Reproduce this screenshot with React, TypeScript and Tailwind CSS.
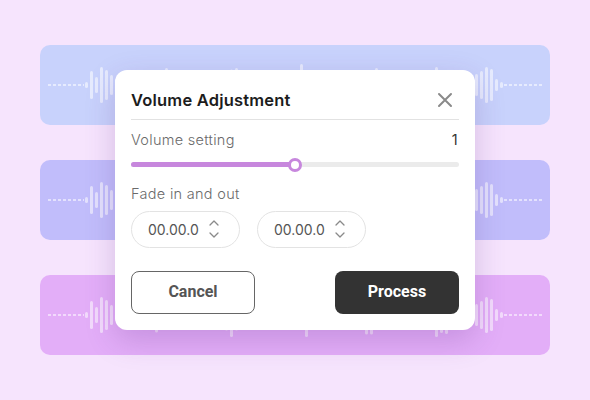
import React from 'react';

function rand(seed: number) {
  let s = seed;
  return () => {
    s = (s * 9301 + 49297) % 233280;
    return s / 233280;
  };
}

function makeHeights(seed: number) {
  const r = rand(seed);
  const out: number[] = [];
  for (let i = 0; i < 84; i++) {
    const burst = i % 14 < 3 ? 1 : 0;
    const base = burst ? 14 + r() * 30 : 4 + r() * 8;
    out.push(Math.round(base));
  }
  const left = [6, 28, 16, 36, 30, 20, 12];
  const right = [16, 22, 28, 36, 32, 12, 6];
  left.forEach((h, i) => (out[i] = h));
  right.forEach((h, i) => (out[out.length - right.length + i] = h));
  return out;
}

function Wave({ seed }: { seed: number }) {
  const hs = makeHeights(seed);
  return (
    <svg width="510" height="80" viewBox="0 0 510 80" className="block">
      <line x1="8" y1="40" x2="44" y2="40" stroke="white" strokeOpacity="0.55" strokeWidth="2" strokeDasharray="3 2" />
      <line x1="464" y1="40" x2="502" y2="40" stroke="white" strokeOpacity="0.55" strokeWidth="2" strokeDasharray="3 2" />
      {hs.map((h, i) => (
        <rect
          key={i}
          x={45 + i * 5}
          y={40 - h / 2}
          width="3"
          height={h}
          rx="1.5"
          fill="white"
          fillOpacity="0.55"
        />
      ))}
    </svg>
  );
}

function Chevrons() {
  return (
    <svg width="12" height="22" viewBox="0 0 12 22" fill="none" stroke="#8a8a8a" strokeWidth="1.3" strokeLinecap="round" strokeLinejoin="round">
      <path d="M2 7 L6 3 L10 7" />
      <path d="M2 15 L6 19 L10 15" />
    </svg>
  );
}

function TimeInput() {
  return (
    <div className="w-[109px] h-[37px] rounded-full border border-[#e3e3e3] flex items-center pl-[16px] pr-[19px] justify-between">
      <span className="text-[14px] text-[#555] font-['Inter',sans-serif]">00.00.0</span>
      <Chevrons />
    </div>
  );
}

export default function App() {
  return (
    <div className="relative w-[590px] h-[400px] bg-[#f6e4fd] overflow-hidden">
      <div className="flex flex-col gap-[35px] pt-[45px] pl-[40px]">
        <div className="w-[510px] h-[80px] rounded-[10px] bg-[#c8d2fc]">
          <Wave seed={7} />
        </div>
        <div className="w-[510px] h-[80px] rounded-[10px] bg-[#c1bdfb]">
          <Wave seed={31} />
        </div>
        <div className="w-[510px] h-[80px] rounded-[10px] bg-[#e3aef8]">
          <Wave seed={53} />
        </div>
      </div>

      <div className="absolute left-[115px] top-[70px] w-[360px] h-[260px] bg-white rounded-[12px] shadow-[0_10px_30px_rgba(90,40,130,0.22)] px-[16px] pt-[19px]">
        <div className="flex items-center justify-between h-[22px]">
          <span className="text-[16.5px] font-semibold text-[#1c1c1c] font-['Inter',sans-serif] tracking-[0.2px]">Volume Adjustment</span>
          <svg width="16" height="16" viewBox="0 0 16 16" className="mr-[6px]" stroke="#8a8a8a" strokeWidth="2" strokeLinecap="round">
            <path d="M2 2 L14 14 M14 2 L2 14" />
          </svg>
        </div>
        <div className="h-px bg-[#e2e2e2] mt-[8px]" />
        <div className="flex items-center justify-between mt-[9px] font-['Inter',sans-serif] text-[14.5px] tracking-[0.3px]">
          <span className="text-[#6a6a6a] font-light">Volume setting</span>
          <span className="text-[#333] mr-[1px]">1</span>
        </div>
        <div className="relative h-[14px] mt-[7px] flex items-center">
          <div className="w-full h-[5px] rounded-full bg-[#ebebeb]">
            <div className="w-[164px] h-[5px] rounded-full bg-[#c787dd]" />
          </div>
          <div className="absolute left-[157px] top-0 w-[14px] h-[14px] rounded-full bg-white border-[3px] border-[#c787dd]" />
        </div>
        <div className="mt-[11px] text-[14.5px] tracking-[0.3px] text-[#6a6a6a] font-light font-['Inter',sans-serif]">Fade in and out</div>
        <div className="flex gap-[17px] mt-[6px]">
          <TimeInput />
          <TimeInput />
        </div>
        <div className="flex justify-between mt-[23px] font-['Roboto',sans-serif]">
          <button className="w-[124px] h-[43px] rounded-[8px] border border-[#666] text-[16px] font-bold text-[#555]">Cancel</button>
          <button className="w-[124px] h-[43px] rounded-[8px] bg-[#333] text-[16px] font-bold text-white">Process</button>
        </div>
      </div>
    </div>
  );
}
